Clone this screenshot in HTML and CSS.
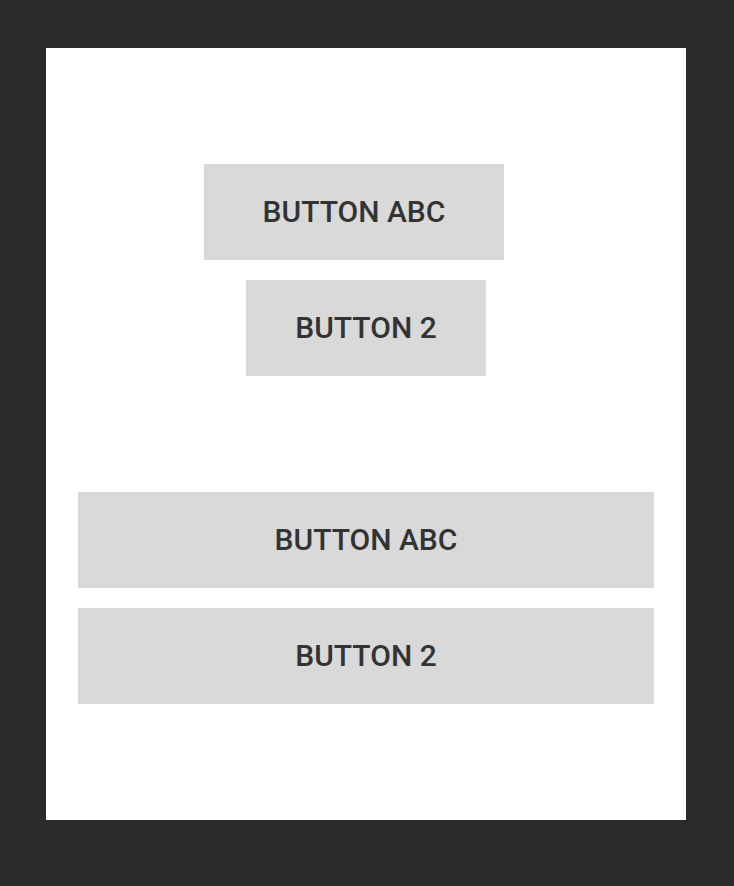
FILE: index.html
```html
<!DOCTYPE html>
<html>
<head>
<meta charset="utf-8">
<link rel="stylesheet" href="styles.css">
</head>
<body>
<div class="panel">
  <div class="group">
    <div class="btn btn-abc">BUTTON ABC</div>
    <div class="btn btn-two">BUTTON 2</div>
  </div>
  <div class="group wide">
    <div class="btn">BUTTON ABC</div>
    <div class="btn">BUTTON 2</div>
  </div>
</div>
</body>
</html>
```
FILE: styles.css
```css
html, body {
  margin: 0;
  padding: 0;
  background: #2b2b2b;
}
body {
  padding: 48px 48px 66px 46px;
  font-family: Roboto, "Liberation Sans", sans-serif;
}
.panel {
  width: 640px;
  height: 772px;
  box-sizing: border-box;
  background: #ffffff;
  padding: 116px 32px;
  display: flex;
  flex-direction: column;
  gap: 116px;
}
.group {
  display: flex;
  flex-direction: column;
  align-items: center;
  gap: 20px;
}
.group.wide {
  align-items: stretch;
}
.btn {
  height: 96px;
  box-sizing: border-box;
  padding-bottom: 2px;
  background: #d9d9d9;
  color: #333333;
  font-size: 30px;
  font-weight: 500;
  display: flex;
  align-items: center;
  justify-content: center;
}
.btn-abc {
  width: 300px;
  margin-right: 24px;
}
.btn-two {
  width: 240px;
}
```
